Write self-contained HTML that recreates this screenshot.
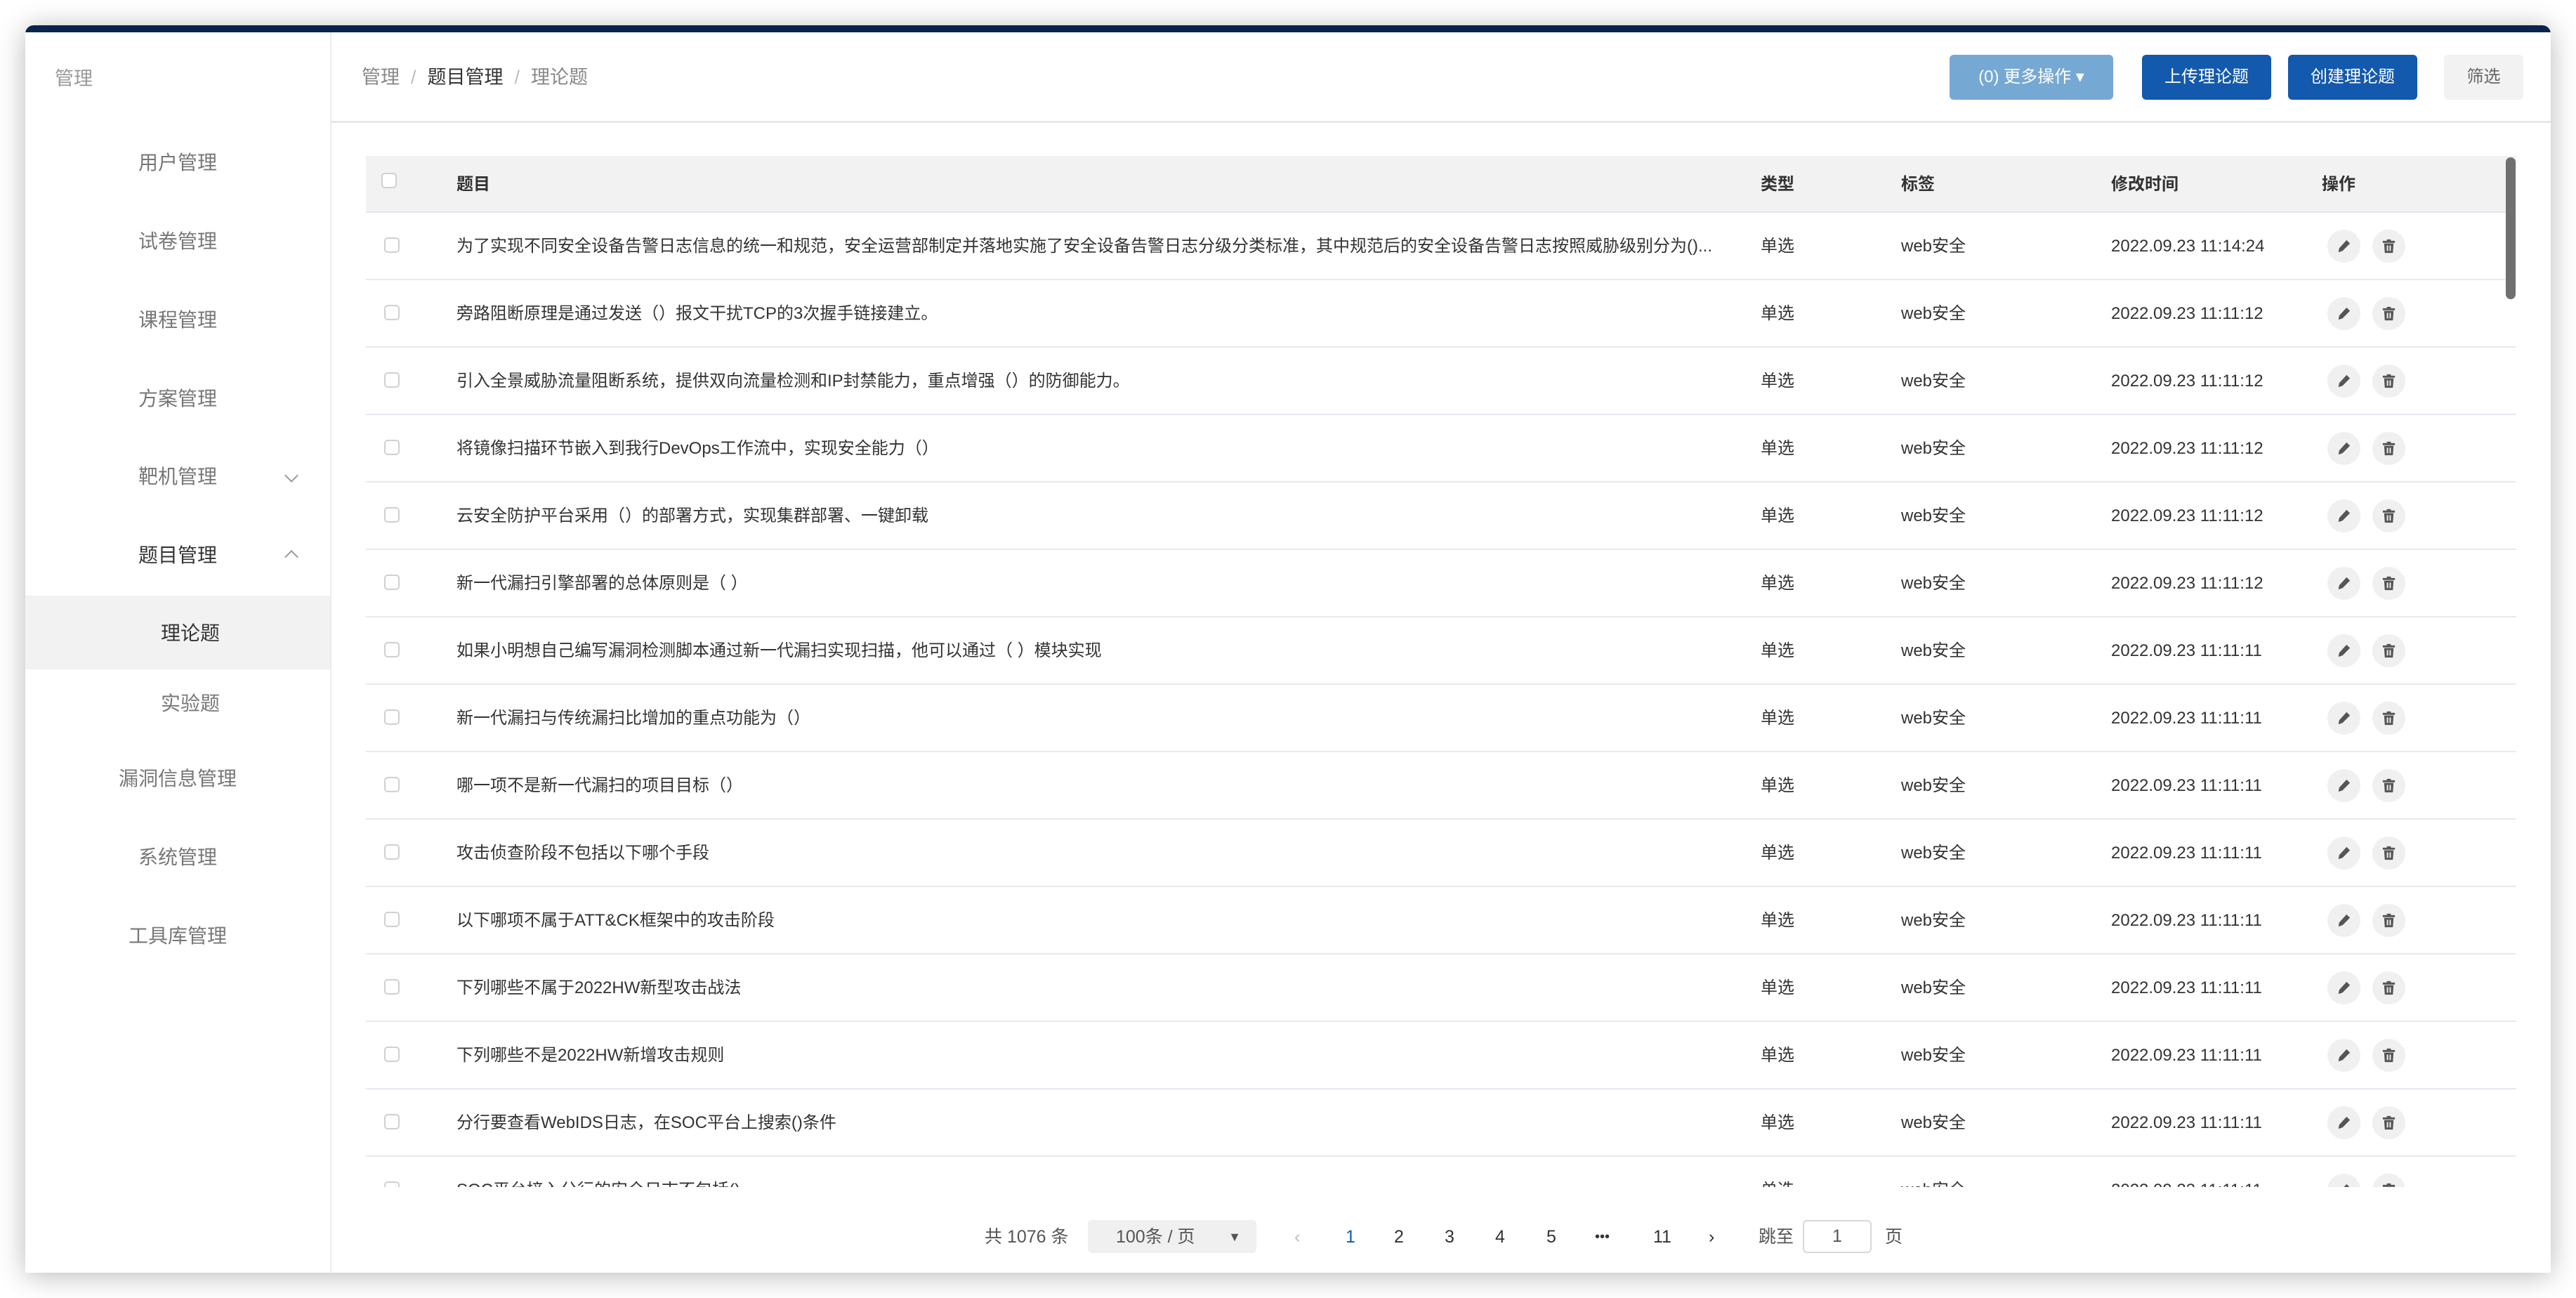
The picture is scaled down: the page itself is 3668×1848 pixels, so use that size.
<!DOCTYPE html>
<html><head><meta charset="utf-8"><style>
*{margin:0;padding:0;box-sizing:border-box}
html,body{width:3668px;height:1848px;overflow:hidden;background:#fff;font-family:"Liberation Sans","Noto Sans CJK SC",sans-serif;color:#333}
.frame{position:absolute;left:36px;top:36px;width:3596px;height:1776px;background:#fff;border-radius:12px 12px 0 0;box-shadow:0 4px 40px rgba(0,0,0,.28);overflow:hidden}
.topbar{position:absolute;left:0;top:0;width:100%;height:10px;background:#0c2349}
.side{position:absolute;left:0;top:10px;width:436px;bottom:0;border-right:2px solid #ececec}
.side .t{position:absolute;left:42px;top:44px;font-size:27px;color:#999}
.mi{position:absolute;left:0;width:434px;text-align:center;font-size:28px;color:#777;line-height:40px}
.mi.dark{color:#333}
.chev{position:absolute;left:372px;width:14px;height:14px;border-right:2px solid #999;border-bottom:2px solid #999}
.sel{position:absolute;left:0;top:802px;width:434px;height:105px;background:#f2f2f2}
.main{position:absolute;left:436px;top:10px;right:0;bottom:0}
.hdr{position:absolute;left:0;top:0;right:0;height:129px;border-bottom:3px solid #e8e8e8}
.bc{position:absolute;left:43px;top:44px;font-size:27px;color:#888;line-height:40px}
.bc b{font-weight:normal;color:#333}
.bc i{font-style:normal;color:#bbb;margin:0 16px}
.btn{position:absolute;top:32px;height:64px;border-radius:6px;font-size:24px;color:#fff;text-align:center;line-height:64px}
.tbl{position:absolute;left:49px;top:176px;width:3062px}
.th{position:absolute;left:0;top:0;width:3062px;height:81px;background:#f2f2f2;border-bottom:2px solid #e6e9f0;font-weight:bold;font-size:24px}
.body{position:absolute;left:0;top:81px;width:3062px;height:1387px;overflow:hidden}
.row{position:absolute;left:0;width:3062px;height:96px;border-bottom:2px solid #e6e9f0;font-size:24px}
.c{position:absolute;top:0;line-height:96px;white-space:nowrap}
.cb{position:absolute;left:26px;width:22px;height:22px;border:2px solid #d0d0d0;border-radius:5px;background:#fff}
.ic{position:absolute;top:24px;width:47px;height:47px;border-radius:50%;background:#f0f0f0}
.ic svg{position:absolute;left:12px;top:12px}
.sb{position:absolute;left:3096px;top:178px;width:14px;height:202px;border-radius:7px;background:#6f6f6f}
.pg{position:absolute;top:1691px;font-size:25px;line-height:48px;color:#333}
</style></head><body>
<div class="frame">
<div class="topbar"></div>
<div class="side">
<div class="t">管理</div>
<div class="mi" style="top:166px">用户管理</div>
<div class="mi" style="top:278px">试卷管理</div>
<div class="mi" style="top:390px">课程管理</div>
<div class="mi" style="top:502px">方案管理</div>
<div class="mi" style="top:613px">靶机管理</div>
<div class="chev" style="top:624px;transform:rotate(45deg)"></div>
<div class="mi dark" style="top:725px">题目管理</div>
<div class="chev" style="top:740px;transform:rotate(-135deg)"></div>
<div class="sel"></div>
<div class="mi dark" style="top:836px;padding-left:36px">理论题</div>
<div class="mi" style="top:936px;padding-left:36px">实验题</div>
<div class="mi" style="top:1043px">漏洞信息管理</div>
<div class="mi" style="top:1155px">系统管理</div>
<div class="mi" style="top:1267px">工具库管理</div>
</div>
<div class="main">
<div class="hdr">
<div class="bc">管理<i>/</i><b>题目管理</b><i>/</i>理论题</div>
<div class="btn" style="left:2304px;width:233px;background:#76a8d4">(0) 更多操作 ▾</div>
<div class="btn" style="left:2578px;width:184px;background:#1359ad">上传理论题</div>
<div class="btn" style="left:2786px;width:184px;background:#1359ad">创建理论题</div>
<div class="btn" style="left:3008px;width:113px;background:#f2f2f2;color:#666">筛选</div>
</div>
<div class="tbl">
<div class="th">
<div class="cb" style="top:24px;left:22px"></div>
<div class="c" style="left:129px;line-height:81px">题目</div>
<div class="c" style="left:1986px;line-height:81px">类型</div>
<div class="c" style="left:2186px;line-height:81px">标签</div>
<div class="c" style="left:2485px;line-height:81px">修改时间</div>
<div class="c" style="left:2785px;line-height:81px">操作</div>
</div>
<div class="body" id="b"></div>
</div>
<div class="sb"></div>
<div class="pg" style="left:930px;color:#555">共 1076 条</div>
<div class="pg" style="left:1077px;width:240px;height:47px;background:#f0f0f0;border-radius:6px;padding-left:40px;color:#555">100条 / 页<span style="position:absolute;right:22px;font-size:18px">▼</span></div>
<div class="pg" style="left:1371px;color:#bbb">‹</div>
<div class="pg" style="left:1444px;color:#1359ad">1</div>
<div class="pg" style="left:1513px">2</div>
<div class="pg" style="left:1585px">3</div>
<div class="pg" style="left:1657px">4</div>
<div class="pg" style="left:1730px">5</div>
<div class="pg" style="left:1799px;font-size:20px">•••</div>
<div class="pg" style="left:1882px">11</div>
<div class="pg" style="left:1961px">›</div>
<div class="pg" style="left:2032px;color:#555">跳至</div>
<div class="pg" style="left:2095px;width:98px;height:47px;border:2px solid #d8d8d8;border-radius:6px;text-align:center;color:#555;line-height:43px">1</div>
<div class="pg" style="left:2212px;color:#555">页</div>
</div>
</div>
<script>
var t=["为了实现不同安全设备告警日志信息的统一和规范，安全运营部制定并落地实施了安全设备告警日志分级分类标准，其中规范后的安全设备告警日志按照威胁级别分为()...","旁路阻断原理是通过发送（）报文干扰TCP的3次握手链接建立。","引入全景威胁流量阻断系统，提供双向流量检测和IP封禁能力，重点增强（）的防御能力。","将镜像扫描环节嵌入到我行DevOps工作流中，实现安全能力（）","云安全防护平台采用（）的部署方式，实现集群部署、一键卸载","新一代漏扫引擎部署的总体原则是（ ）","如果小明想自己编写漏洞检测脚本通过新一代漏扫实现扫描，他可以通过（ ）模块实现","新一代漏扫与传统漏扫比增加的重点功能为（）","哪一项不是新一代漏扫的项目目标（）","攻击侦查阶段不包括以下哪个手段","以下哪项不属于ATT&CK框架中的攻击阶段","下列哪些不属于2022HW新型攻击战法","下列哪些不是2022HW新增攻击规则","分行要查看WebIDS日志，在SOC平台上搜索()条件","SOC平台接入分行的安全日志不包括()"];
var d=["2022.09.23 11:14:24","2022.09.23 11:11:12","2022.09.23 11:11:12","2022.09.23 11:11:12","2022.09.23 11:11:12","2022.09.23 11:11:12","2022.09.23 11:11:11","2022.09.23 11:11:11","2022.09.23 11:11:11","2022.09.23 11:11:11","2022.09.23 11:11:11","2022.09.23 11:11:11","2022.09.23 11:11:11","2022.09.23 11:11:11","2022.09.23 11:11:11"];
var pen='<svg width="23" height="23" viewBox="0 0 24 24"><path d="M16 3l5 5-11 11-6 2 1-6z M4 20l1-4 3 3z" fill="#555"/></svg>';
var bin='<svg width="23" height="23" viewBox="0 0 24 24"><path d="M9 2h6v2h6v3H3V4h6z M5 8h14l-1 14H6z" fill="#555"/><path d="M10 11v8M14 11v8" stroke="#f0f0f0" stroke-width="2"/></svg>';
var h='';
for(var i=0;i<15;i++){h+='<div class="row" style="top:'+(i*96)+'px"><div class="cb" style="top:35px"></div><div class="c" style="left:129px">'+t[i].replace(/&/g,'&amp;')+'</div><div class="c" style="left:1986px">单选</div><div class="c" style="left:2186px">web安全</div><div class="c" style="left:2485px">'+d[i]+'</div><div class="ic" style="left:2793px">'+pen+'</div><div class="ic" style="left:2857px">'+bin+'</div></div>';}
document.getElementById('b').innerHTML=h;
</script>
</body></html>
